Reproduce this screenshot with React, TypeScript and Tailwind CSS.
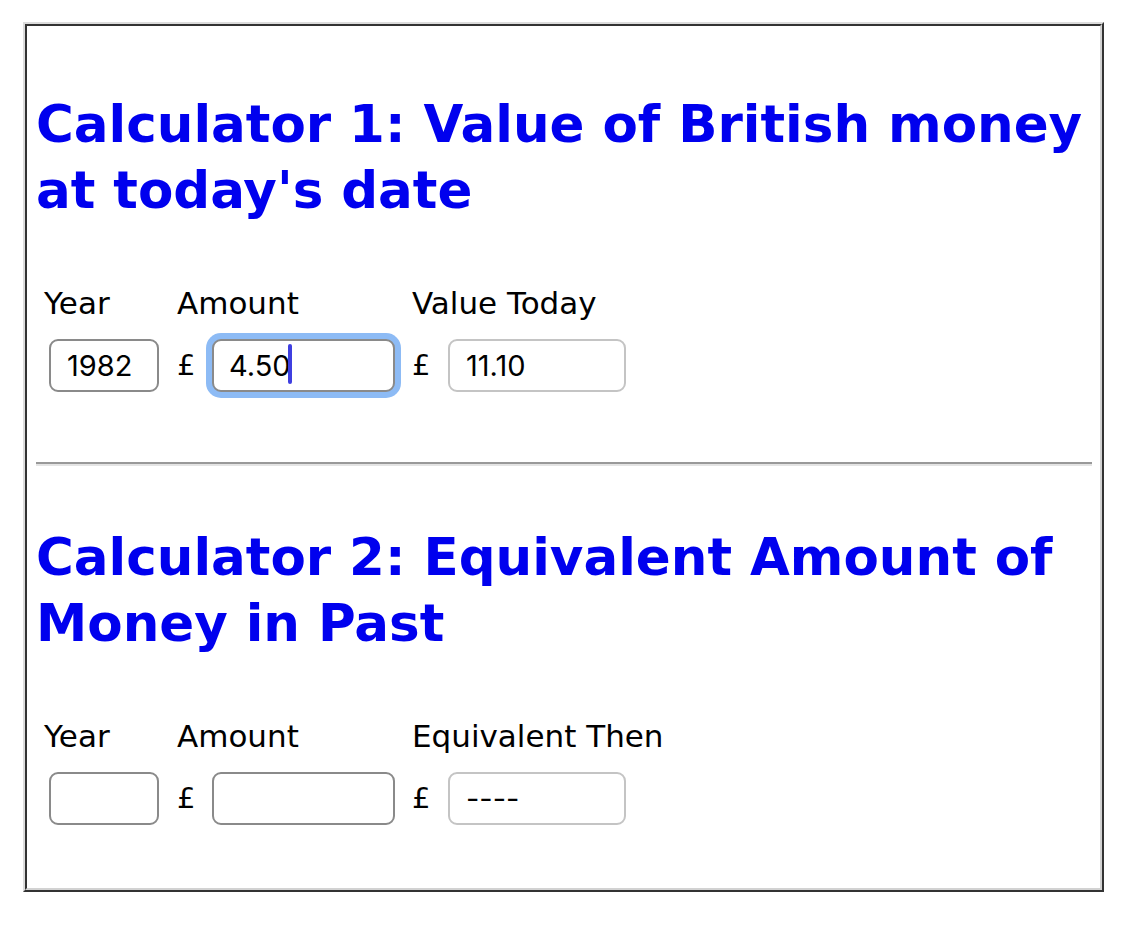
import React from "react";

type CalcProps = {
  title: string;
  resultLabel: string;
  year: string;
  amount: string;
  result: string;
  focused?: boolean;
};

const headingFont = { fontFamily: '"DejaVu Sans", Verdana, sans-serif' };

function Calculator({ title, resultLabel, year, amount, result, focused = false }: CalcProps) {
  return (
    <div>
      <h2
        className="mt-[65px] text-[51.5px] leading-[66px] font-bold text-[#0000ee]"
        style={headingFont}
      >
        {title}
      </h2>

      {/* labels */}
      <div
        className="mt-[63px] flex pl-[8px] text-[31px] leading-[34px] text-black"
        style={headingFont}
      >
        <span className="w-[133px]">Year</span>
        <span className="w-[235px]">Amount</span>
        <span>{resultLabel}</span>
      </div>

      {/* inputs */}
      <div className="mt-[19px] flex items-center pl-[13px] text-[29px] text-black">
        <input
          readOnly
          value={year}
          className="h-[53px] w-[110px] rounded-[9px] border-2 border-[#8a8a8a] bg-white px-[16px] text-[29px] outline-none"
          style={{ fontFamily: "Inter, sans-serif" }}
        />
        <span className="ml-[18px] w-[35px]" style={headingFont}>
          £
        </span>
        <div className="relative">
          <input
            readOnly
            value={amount}
            className={`h-[53px] w-[183px] rounded-[9px] border-2 border-[#8a8a8a] bg-white px-[15px] text-[29px] outline-none ${
              focused ? "shadow-[0_0_0_6px_#8dbbf5]" : ""
            }`}
            style={{ fontFamily: "Inter, sans-serif" }}
          />
          {focused && (
            <span className="absolute left-[76px] top-[5px] h-[40px] w-[4px] rounded-sm bg-[#3f3fe0]" />
          )}
        </div>
        <span className="ml-[17px] w-[36px]" style={headingFont}>
          £
        </span>
        <input
          readOnly
          value={result}
          className="h-[53px] w-[178px] rounded-[9px] border-2 border-[#c4c4c4] bg-white px-[16px] text-[29px] outline-none"
          style={{ fontFamily: "Inter, sans-serif" }}
        />
      </div>
    </div>
  );
}

export default function App() {
  return (
    <div className="min-h-[942px] bg-white pl-[23px] pt-[22px]">
      <div className="h-[870px] w-[1081px] border-2 border-t-[#dcdcdc] border-l-[#dcdcdc] border-r-[#333] border-b-[#333]">
        <div className="h-full border-2 border-t-[#333] border-l-[#333] border-r-[#d2d2d2] border-b-[#d2d2d2] pl-[9px] pr-[8px]">
          <Calculator
            title="Calculator 1: Value of British money at today's date"
            resultLabel="Value Today"
            year="1982"
            amount="4.50"
            result="11.10"
            focused
          />

          <hr className="mt-[70px] border-t-2 border-b-2 border-t-[#999999] border-b-[#e4e4e4]" />

          <div className="-mt-[7px]">
            <Calculator
              title="Calculator 2: Equivalent Amount of Money in Past"
              resultLabel="Equivalent Then"
              year=""
              amount=""
              result="----"
            />
          </div>
        </div>
      </div>
    </div>
  );
}
